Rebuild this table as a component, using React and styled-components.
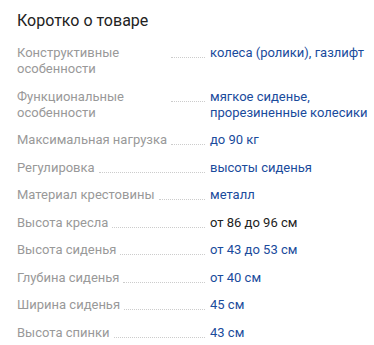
import React from "react";
import styled, { createGlobalStyle } from "styled-components";

const Global = createGlobalStyle`
  html, body { margin: 0; padding: 0; background: #fff; }
  body { font-family: Roboto, "Noto Sans", sans-serif; }
`;

const Wrap = styled.section`
  width: 374px;
  box-sizing: border-box;
  padding: 11px 6px 0 17px;
`;

const Title = styled.h2`
  margin: 0 0 14px;
  font-size: 16px;
  line-height: 20px;
  font-weight: 400;
  color: #222;
`;

const List = styled.dl`
  margin: 0;
  display: flex;
  flex-direction: column;
  gap: 11.5px;
`;

const Row = styled.div`
  display: grid;
  grid-template-columns: 188px 1fr;
  column-gap: 5px;
  font-size: 13px;
  line-height: 16px;
`;

const Term = styled.dt`
  margin: 0;
  display: flex;
  align-items: flex-start;
  color: #999;
`;

const TermText = styled.span`
  max-width: 150px;
`;

const Leader = styled.span`
  flex: 1;
  height: 12px;
  margin-left: 4px;
  border-bottom: 1px dotted #ccc;
`;

const Desc = styled.dd`
  margin: 0;
  color: ${(p) => (p.$plain ? "#222" : "#1a4b9c")};
`;

const rows = [
  ["Конструктивные особенности", "колеса (ролики), газлифт"],
  ["Функциональные особенности", "мягкое сиденье, прорезиненные колесики"],
  ["Максимальная нагрузка", "до 90 кг"],
  ["Регулировка", "высоты сиденья"],
  ["Материал крестовины", "металл"],
  ["Высота кресла", "от 86 до 96 см", true],
  ["Высота сиденья", "от 43 до 53 см"],
  ["Глубина сиденья", "от 40 см"],
  ["Ширина сиденья", "45 см"],
  ["Высота спинки", "43 см"],
];

export default function App() {
  return (
    <Wrap>
      <Global />
      <Title>Коротко о товаре</Title>
      <List>
        {rows.map(([k, v, plain]) => (
          <Row key={k}>
            <Term>
              <TermText>{k}</TermText>
              <Leader />
            </Term>
            <Desc $plain={plain}>{v}</Desc>
          </Row>
        ))}
      </List>
    </Wrap>
  );
}
